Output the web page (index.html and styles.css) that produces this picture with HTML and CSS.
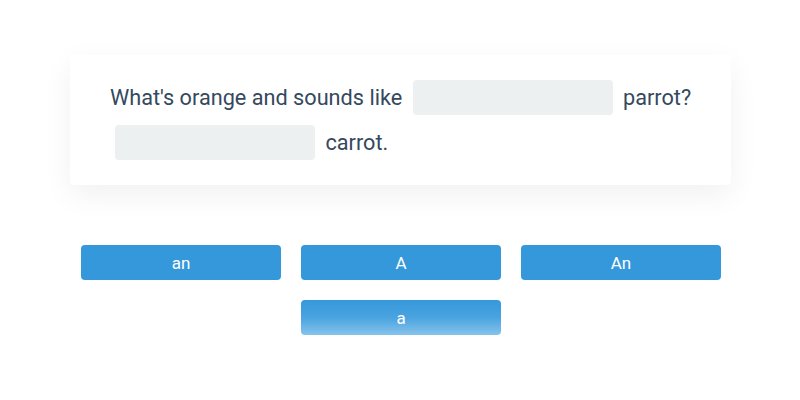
FILE: index.html
```html
<!DOCTYPE html>
<html>
<head>
<meta charset="utf-8">
<link rel="stylesheet" href="styles.css">
</head>
<body>
<div class="page">
  <div class="card">
    <p class="sentence">What's orange and sounds like <span class="blank"></span> parrot? <span class="blank"></span> carrot.</p>
  </div>
  <div class="options">
    <button class="opt">an</button>
    <button class="opt">A</button>
    <button class="opt">An</button>
    <button class="opt fading">a</button>
  </div>
</div>
</body>
</html>
```

FILE: styles.css
```css
html, body {
  margin: 0;
  padding: 0;
  background: #ffffff;
  font-family: Roboto, "Liberation Sans", sans-serif;
}
.page {
  width: 661px;
  margin: 0 auto;
  padding-top: 55px;
  padding-left: 1px;
}
.card {
  background: #fff;
  padding: 20px 30px 20px 40px;
  box-shadow: 0 10px 30px rgba(0, 0, 0, 0.06);
  border-radius: 0 0 4px 4px;
}
.sentence {
  margin: 0;
  font-size: 21.7px;
  line-height: 45px;
  color: #34495e;
}
.blank {
  display: inline-block;
  width: 200px;
  height: 35px;
  margin: 0 5px;
  vertical-align: middle;
  position: relative;
  top: -2px;
  background: #ecf0f1;
  border-radius: 4px;
}
.options {
  display: flex;
  flex-wrap: wrap;
  justify-content: center;
  gap: 20px;
  margin-top: 60px;
  padding-left: 1px;
}
.opt {
  width: 200px;
  height: 35px;
  border: 0;
  border-radius: 4px;
  background: #3598db;
  color: #fff;
  font-family: Roboto, "Liberation Sans", sans-serif;
  font-size: 17px;
  padding: 0;
}
.opt.fading {
  background: linear-gradient(to bottom, #3598db 0%, #4aa3e0 50%, #86c3ec 100%);
}
```
